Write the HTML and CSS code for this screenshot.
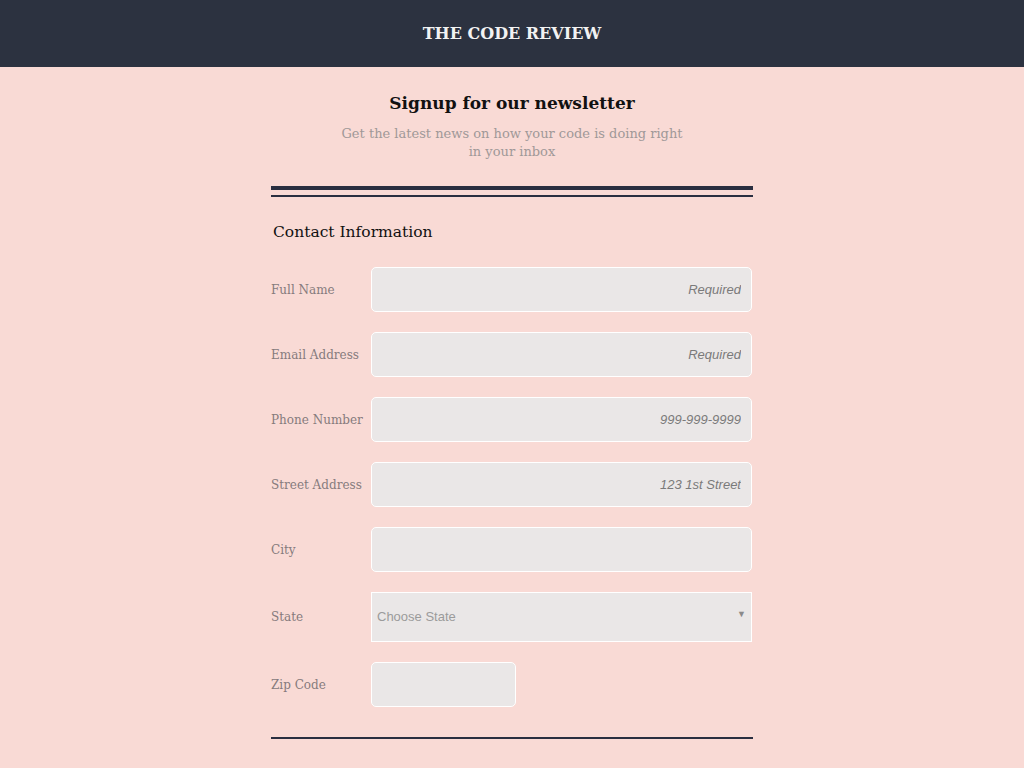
FILE: index.html
```html
<!DOCTYPE html>
<html lang="en">
<head>
<meta charset="utf-8">
<title>The Code Review</title>
<link rel="stylesheet" href="styles.css">
</head>
<body>
<header class="topbar">
  <h1 class="brand">THE CODE REVIEW</h1>
</header>
<main class="page">
  <section class="intro">
    <h2 class="intro-title">Signup for our newsletter</h2>
    <p class="intro-text">Get the latest news on how your code is doing right in your inbox</p>
  </section>
  <div class="double-rule"></div>
  <form class="form">
    <h3 class="section-title">Contact Information</h3>
    <div class="row">
      <label class="label" for="name">Full Name</label>
      <input class="field" id="name" type="text" placeholder="Required">
    </div>
    <div class="row">
      <label class="label" for="email">Email Address</label>
      <input class="field" id="email" type="email" placeholder="Required">
    </div>
    <div class="row">
      <label class="label" for="phone">Phone Number</label>
      <input class="field" id="phone" type="tel" placeholder="999-999-9999">
    </div>
    <div class="row">
      <label class="label" for="street">Street Address</label>
      <input class="field" id="street" type="text" placeholder="123 1st Street">
    </div>
    <div class="row">
      <label class="label" for="city">City</label>
      <input class="field" id="city" type="text">
    </div>
    <div class="row row-select">
      <label class="label" for="state">State</label>
      <div class="select">
        <span class="select-text">Choose State</span>
        <span class="select-arrow">▼</span>
      </div>
    </div>
    <div class="row">
      <label class="label" for="zip">Zip Code</label>
      <input class="field field-zip" id="zip" type="text">
    </div>
  </form>
  <div class="bottom-rule"></div>
</main>
</body>
</html>
```
FILE: styles.css
```css
* { box-sizing: border-box; }
html, body { margin: 0; padding: 0; }
body {
  background: #f9dad5;
  font-family: "DejaVu Serif", "Liberation Serif", serif;
  height: 768px;
  overflow: hidden;
}
.topbar {
  background: #2c3240;
  height: 67px;
  display: flex;
  align-items: center;
  justify-content: center;
}
.brand {
  margin: 0;
  color: #f2f2f2;
  font-size: 16px;
  font-weight: bold;
}
.page {
  width: 482px;
  margin: 0 auto;
}
.intro {
  text-align: center;
  padding-top: 24px;
}
.intro-title {
  margin: 0;
  font-size: 17px;
  font-weight: bold;
  color: #111;
  line-height: 24px;
}
.intro-text {
  margin: 10px auto 0;
  width: 352px;
  font-size: 13px;
  line-height: 18px;
  color: #a09898;
}
.double-rule {
  margin-top: 25px;
  height: 11px;
  border-top: 4px solid #2a2e40;
  border-bottom: 2px solid #2a2e40;
}
.form {
  padding-top: 24px;
}
.section-title {
  margin: 0 0 24px 2px;
  font-size: 15.5px;
  font-weight: normal;
  color: #111;
  line-height: 22px;
}
.row {
  display: flex;
  align-items: center;
  margin-bottom: 20px;
}
.label {
  width: 100px;
  flex: none;
  font-size: 12px;
  color: #867a7d;
}
.field {
  width: 381px;
  height: 45px;
  border: 1px solid #ffffff;
  border-radius: 5px;
  background: #eae7e7;
  text-align: right;
  padding: 0 10px;
  font-family: "Liberation Sans", Arial, sans-serif;
  font-size: 13px;
  color: #333;
}
.field::placeholder {
  font-style: italic;
  color: #7a7a7a;
}
.field-zip { width: 145px; }
.select {
  width: 381px;
  height: 50px;
  border: 1px solid #ffffff;
  background: #eae7e7;
  display: flex;
  align-items: center;
  justify-content: space-between;
  padding: 0 5px 2px 5px;
  font-family: "Liberation Sans", Arial, sans-serif;
}
.select-text {
  font-size: 13px;
  color: #9b9b9b;
}
.select-arrow {
  font-size: 9px;
  color: #8a8a8a;
  padding-bottom: 4px;
}
.bottom-rule {
  margin-top: 30px;
  border-top: 2px solid #2a2e40;
}
```
